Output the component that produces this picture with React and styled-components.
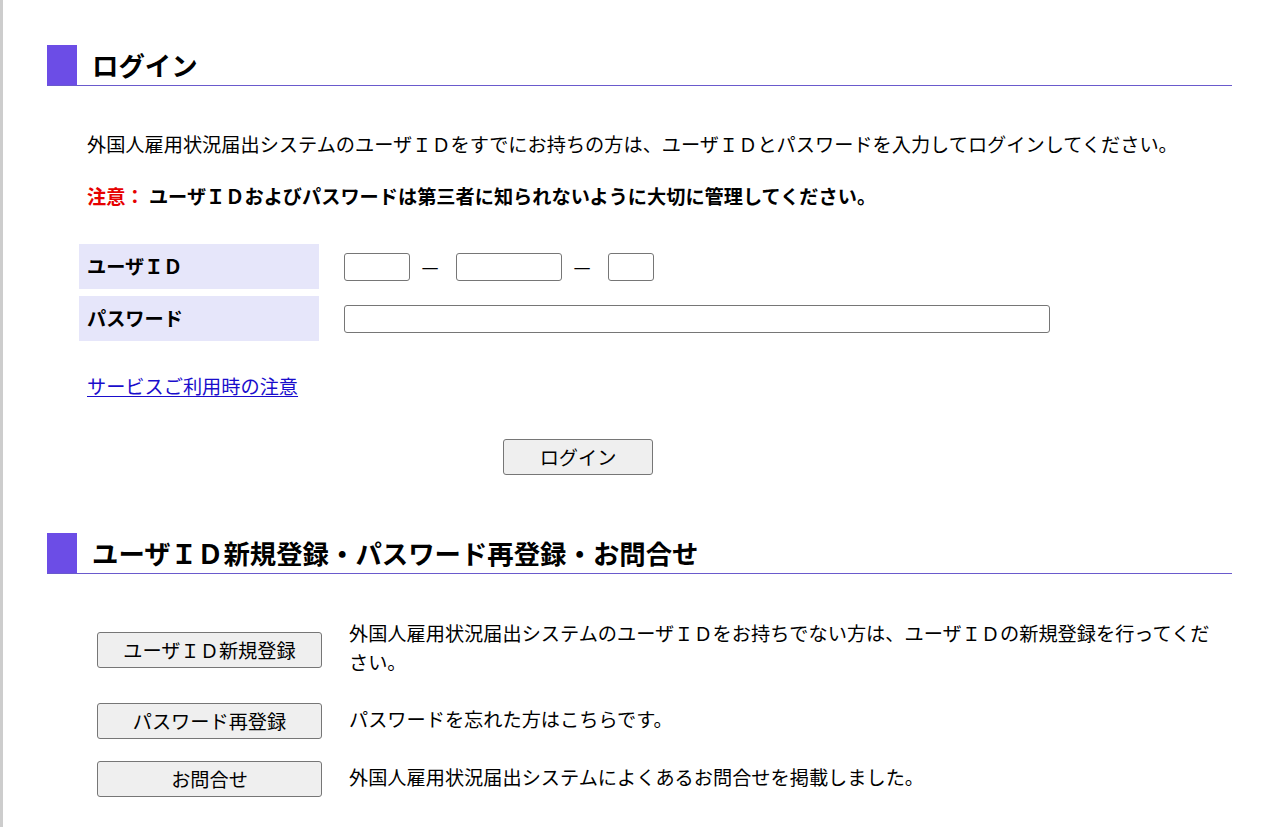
import React from "react";
import styled, { createGlobalStyle } from "styled-components";

const GlobalStyle = createGlobalStyle`
  html, body { margin: 0; padding: 0; background: #fff; }
  body {
    font-family: "Noto Sans CJK JP", "Noto Sans", sans-serif;
    font-size: 19.2px;
    line-height: 29px;
    color: #000;
  }
  * { box-sizing: border-box; }
`;

const Page = styled.div`
  min-height: 100vh;
  border-left: 3px solid #cdcdcd;
  padding: 45px 34px 20px 44px;
`;

const Heading = styled.h2`
  display: flex;
  align-items: center;
  height: 41px;
  margin: ${(p) => p.$mt || 0}px 0 0 0;
  border-bottom: 1px solid #6a5acd;
  font-size: 26.4px;
  font-weight: bold;
  line-height: 40px;
`;

const Mark = styled.span`
  width: 30px;
  height: 40px;
  background: #6c4de6;
  margin-right: 15px;
  flex: none;
`;

const Para = styled.p`
  margin: ${(p) => p.$mt}px 0 0 40px;
  font-weight: ${(p) => (p.$bold ? "bold" : "normal")};
`;

const Warn = styled.span`
  color: #e60000;
`;

const FormGrid = styled.div`
  display: grid;
  grid-template-columns: 240px 1fr;
  column-gap: 25px;
  row-gap: 7px;
  margin: 33px 0 0 32px;
`;

const Label = styled.div`
  background: #e6e6fa;
  height: 45px;
  display: flex;
  align-items: center;
  padding-left: 8px;
  font-weight: bold;
`;

const Field = styled.div`
  display: flex;
  align-items: center;
`;

const Input = styled.input`
  width: ${(p) => p.$w}px;
  height: 28px;
  border: 1px solid #767676;
  border-radius: 3px;
  background: #fff;
  padding: 1px 2px;
  font: inherit;
  font-size: 16px;
`;

const Dash = styled.span`
  margin: 0 16px 0 10px;
  width: 20px;
  text-align: center;
`;

const Link = styled.a`
  display: inline-block;
  margin: 31px 0 0 40px;
  color: #1a0dcc;
  text-decoration: underline;
  text-underline-offset: 2px;
`;

const Center = styled.div`
  padding-left: 456px;
  margin-top: 38px;
`;

const Button = styled.button`
  width: ${(p) => p.$w}px;
  height: 36px;
  border: 1px solid #767676;
  border-radius: 3px;
  background: #efefef;
  color: #000;
  font-family: inherit;
  font-size: 19.2px;
  line-height: 29px;
  padding: 0;
  flex: none;
  cursor: pointer;
`;

const Rows = styled.div`
  margin: 45px 0 0 50px;
  display: flex;
  flex-direction: column;
  gap: 22px;
`;

const Row = styled.div`
  display: flex;
  align-items: center;
  gap: 27px;
`;

const Desc = styled.div`
  max-width: 872px;
  margin-bottom: 4px;
`;

export default function App() {
  return (
    <>
      <GlobalStyle />
      <Page>
        <Heading>
          <Mark />
          ログイン
        </Heading>
        <Para $mt={44}>
          外国人雇用状況届出システムのユーザＩＤをすでにお持ちの方は、ユーザＩＤとパスワードを入力してログインしてください。
        </Para>
        <Para $mt={23} $bold>
          <Warn>注意：</Warn> ユーザＩＤおよびパスワードは第三者に知られないように大切に管理してください。
        </Para>
        <FormGrid>
          <Label>ユーザＩＤ</Label>
          <Field>
            <Input $w={66} />
            <Dash>—</Dash>
            <Input $w={106} />
            <Dash>—</Dash>
            <Input $w={46} />
          </Field>
          <Label>パスワード</Label>
          <Field>
            <Input $w={706} type="password" />
          </Field>
        </FormGrid>
        <Link href="#">サービスご利用時の注意</Link>
        <Center>
          <Button $w={150}>ログイン</Button>
        </Center>
        <Heading $mt={58}>
          <Mark />
          ユーザＩＤ新規登録・パスワード再登録・お問合せ
        </Heading>
        <Rows>
          <Row>
            <Button $w={225}>ユーザＩＤ新規登録</Button>
            <Desc>
              外国人雇用状況届出システムのユーザＩＤをお持ちでない方は、ユーザＩＤの新規登録を行ってください。
            </Desc>
          </Row>
          <Row>
            <Button $w={225}>パスワード再登録</Button>
            <Desc>パスワードを忘れた方はこちらです。</Desc>
          </Row>
          <Row>
            <Button $w={225}>お問合せ</Button>
            <Desc>外国人雇用状況届出システムによくあるお問合せを掲載しました。</Desc>
          </Row>
        </Rows>
      </Page>
    </>
  );
}
